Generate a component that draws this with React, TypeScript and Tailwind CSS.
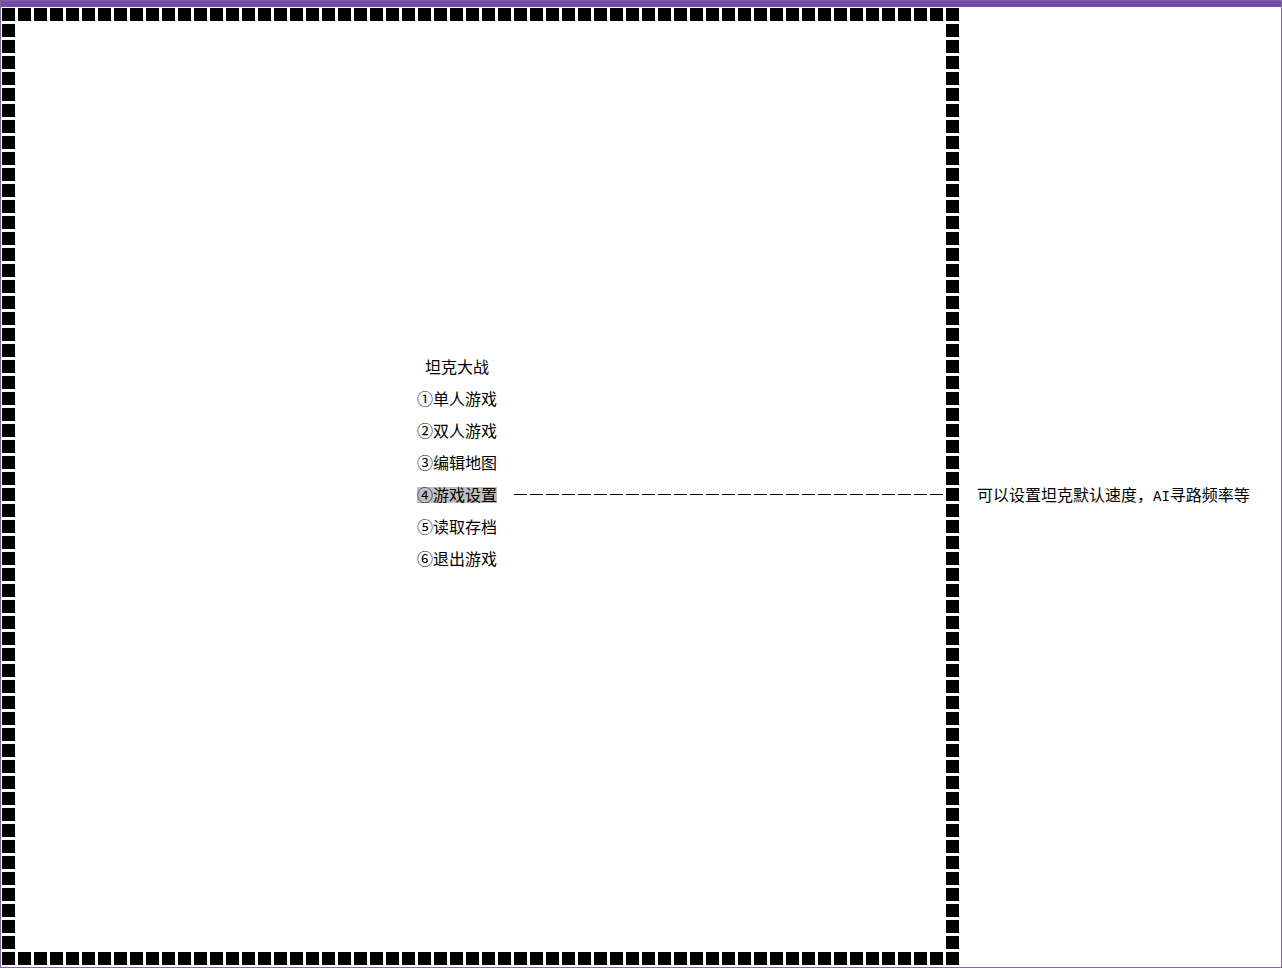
import { useState } from "react";

const SIZE = 60;

const options = [
  { label: "①单人游戏" },
  { label: "②双人游戏" },
  { label: "③编辑地图" },
  { label: "④游戏设置" },
  { label: "⑤读取存档" },
  { label: "⑥退出游戏" },
];

function Brick() {
  return (
    <span className="block h-4 w-4 shrink-0 pt-px pl-px">
      <span className="block h-[13px] w-[13px] bg-black" />
    </span>
  );
}

function Wall({ count, vertical = false }: { count: number; vertical?: boolean }) {
  return (
    <div aria-hidden="true" className={vertical ? "flex flex-col" : "flex"}>
      {Array.from({ length: count }, (_, i) => (
        <Brick key={i} />
      ))}
    </div>
  );
}

function Leader() {
  return (
    <span aria-hidden="true" className="flex flex-1 pt-[7px]">
      {Array.from({ length: 27 }, (_, i) => (
        <span key={i} className="block w-4 shrink-0 pl-px">
          <span className="block h-px w-[13px] bg-black" />
        </span>
      ))}
    </span>
  );
}

export default function App() {
  const [selected, setSelected] = useState(3);

  return (
    <div className="flex min-h-screen flex-col border-x border-b border-[#7d6a98] bg-white font-['Noto_Sans_CJK_SC',sans-serif] text-base text-black">
      <header className="h-[7px] shrink-0 border-t border-[#8560b0] bg-[#744da9]" />
      <div className="flex flex-1">
        <main className="shrink-0">
          <Wall count={SIZE} />
          <div className="flex">
            <Wall count={SIZE - 2} vertical />
            <nav className="flex flex-1 flex-col justify-center gap-4 pb-12 pl-[400px]">
              <h1 className="h-4 w-20 text-center leading-[14px]">坦克大战</h1>
              {options.map((option, i) => (
                <div key={option.label} className="flex gap-4">
                  <button
                    type="button"
                    onClick={() => setSelected(i)}
                    className={
                      i === selected
                        ? "h-4 w-20 shrink-0 bg-[#c0c0c0] pb-[2px] text-left leading-[14px] whitespace-nowrap"
                        : "h-4 w-20 shrink-0 pb-[2px] text-left leading-[14px] whitespace-nowrap"
                    }
                  >
                    {option.label}
                  </button>
                  {i === selected && <Leader />}
                </div>
              ))}
            </nav>
            <Wall count={SIZE - 2} vertical />
          </div>
          <Wall count={SIZE} />
        </main>
        <aside className="flex flex-1 items-center pt-4 pl-4">
          <p className="h-4 leading-[14px] whitespace-nowrap">
            可以设置坦克默认速度，
            <span className="font-['Liberation_Mono',monospace] text-sm leading-[14px]">AI</span>
            寻路频率等
          </p>
        </aside>
      </div>
    </div>
  );
}
